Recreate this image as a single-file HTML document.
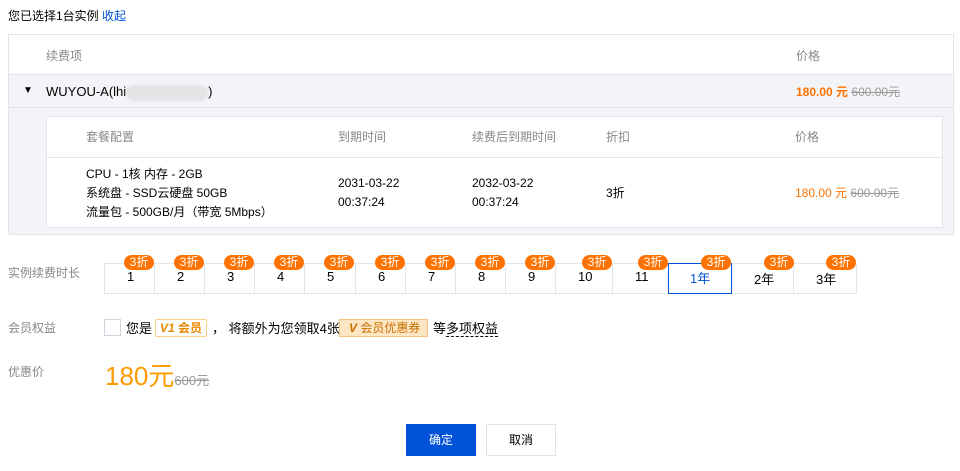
<!DOCTYPE html>
<html><head><meta charset="utf-8"><style>
*{margin:0;padding:0;box-sizing:border-box}
body{width:960px;height:471px;background:#fff;font-family:"Liberation Sans","Noto Sans CJK SC",sans-serif;font-size:12px;color:#000;position:relative;overflow:hidden}
.a{position:absolute;white-space:nowrap}
.g{color:#888}
.or{color:#ff7200}
.del{color:#999;text-decoration:line-through}
.cell{position:absolute;top:263px;height:31px;border:1px solid #e2e5ec;border-left:none}
.cell span{position:absolute;left:22px;top:5px;font-size:13px}
.badge{position:absolute;top:255px;height:15px;width:30px;background:#ff7200;color:#fff;border-radius:8px;font-size:12px;line-height:15px;text-align:center}
</style></head><body>
<div class="a" style="left:8px;top:7px">您已选择1台实例 <span style="color:#0052d9">收起</span></div>
<div class="a" style="left:8px;top:34px;width:946px;height:201px;border:1px solid #e2e5ec;background:#f3f4f7"></div>
<div class="a" style="left:9px;top:35px;width:944px;height:40px;background:#fff;border-bottom:1px solid #e2e5ec"></div>
<div class="a g" style="left:46px;top:47px">续费项</div>
<div class="a g" style="left:796px;top:47px">价格</div>
<div class="a" style="left:9px;top:107px;width:944px;height:1px;background:#e2e5ec"></div>
<div class="a" style="left:23px;top:85px;font-size:10px">▼</div>
<div class="a" style="left:46px;top:84px;font-size:13px">WUYOU-A(lhi<span style="display:inline-block;width:82px;height:16px;background:#e4e4e6;border-radius:8px;vertical-align:middle;filter:blur(1px)"></span>)</div>
<div class="a" style="left:796px;top:83px;font-weight:bold"><span class="or">180.00 元</span> <span class="del" style="font-weight:normal">600.00元</span></div>
<div class="a" style="left:46px;top:116px;width:897px;height:112px;background:#fff;border:1px solid #e2e5ec"></div>
<div class="a" style="left:47px;top:157px;width:895px;height:1px;background:#e2e5ec"></div>
<div class="a g" style="left:86px;top:128px">套餐配置</div>
<div class="a g" style="left:338px;top:128px">到期时间</div>
<div class="a g" style="left:472px;top:128px">续费后到期时间</div>
<div class="a g" style="left:606px;top:128px">折扣</div>
<div class="a g" style="left:795px;top:128px">价格</div>
<div class="a" style="left:86px;top:165px;line-height:19px">CPU - 1核 内存 - 2GB<br>系统盘 - SSD云硬盘 50GB<br>流量包 - 500GB/月（带宽 5Mbps）</div>
<div class="a" style="left:338px;top:174px;line-height:19px">2031-03-22<br>00:37:24</div>
<div class="a" style="left:472px;top:174px;line-height:19px">2032-03-22<br>00:37:24</div>
<div class="a" style="left:606px;top:184px">3折</div>
<div class="a" style="left:795px;top:184px"><span class="or">180.00 元</span> <span class="del">600.00元</span></div>

<div class="a g" style="left:8px;top:264px">实例续费时长</div>
<div class="a" style="left:104px;top:263px;width:1px;height:31px;background:#e2e5ec"></div>
<div class="cell" style="left:105px;width:50px"><span>1</span></div>
<div class="cell" style="left:155px;width:50px"><span>2</span></div>
<div class="cell" style="left:205px;width:50px"><span>3</span></div>
<div class="cell" style="left:255px;width:50px"><span>4</span></div>
<div class="cell" style="left:305px;width:51px"><span>5</span></div>
<div class="cell" style="left:356px;width:50px"><span>6</span></div>
<div class="cell" style="left:406px;width:50px"><span>7</span></div>
<div class="cell" style="left:456px;width:50px"><span>8</span></div>
<div class="cell" style="left:506px;width:50px"><span>9</span></div>
<div class="cell" style="left:556px;width:57px"><span>10</span></div>
<div class="cell" style="left:613px;width:56px"><span>11</span></div>
<div class="cell" style="left:732px;width:62px"><span>2年</span></div>
<div class="cell" style="left:794px;width:63px"><span>3年</span></div>
<div class="a" style="left:668px;top:263px;width:64px;height:31px;border:1px solid #0052d9"><span style="position:absolute;left:21px;top:4px;font-size:13px;color:#0052d9">1年</span></div>
<div class="badge" style="left:124px">3折</div>
<div class="badge" style="left:174px">3折</div>
<div class="badge" style="left:224px">3折</div>
<div class="badge" style="left:274px">3折</div>
<div class="badge" style="left:324px">3折</div>
<div class="badge" style="left:375px">3折</div>
<div class="badge" style="left:425px">3折</div>
<div class="badge" style="left:475px">3折</div>
<div class="badge" style="left:525px">3折</div>
<div class="badge" style="left:582px">3折</div>
<div class="badge" style="left:638px">3折</div>
<div class="badge" style="left:701px">3折</div>
<div class="badge" style="left:764px">3折</div>
<div class="badge" style="left:826px">3折</div>

<div class="a g" style="left:8px;top:319px">会员权益</div>
<div class="a" style="left:104px;top:319px;width:17px;height:17px;border:1px solid #cfd5de"></div>
<div class="a" style="left:126px;top:318px;font-size:13px">您是</div>
<div class="a" style="left:155px;top:319px;width:52px;height:18px;border:1px solid #ffd08a;border-radius:2px;color:#e88a00;font-weight:bold;font-size:12px;line-height:16px;text-align:center"><i>V1</i> 会员</div>
<div class="a" style="left:212px;top:318px;font-size:13px">， 将额外为您领取4张</div>
<div class="a" style="left:339px;top:319px;width:89px;height:18px;background:#fde6c4;border:1px solid #f3c27e;color:#c86e00;font-size:12px;line-height:16px;padding-left:9px"><b><i>V</i></b> 会员优惠券</div>
<div class="a" style="left:433px;top:318px;font-size:13px">等<span style="border-bottom:1px dashed #000">多项权益</span></div>

<div class="a g" style="left:8px;top:363px">优惠价</div>
<div class="a" style="left:105px;top:356px;font-size:26px;color:#ff9900">180元<span style="font-size:13px;color:#999;text-decoration:line-through">600元</span></div>

<div class="a" style="left:406px;top:424px;width:70px;height:32px;background:#0052d9;color:#fff;text-align:center;line-height:32px">确定</div>
<div class="a" style="left:486px;top:424px;width:70px;height:32px;border:1px solid #dfe3ea;text-align:center;line-height:30px">取消</div>
</body></html>
